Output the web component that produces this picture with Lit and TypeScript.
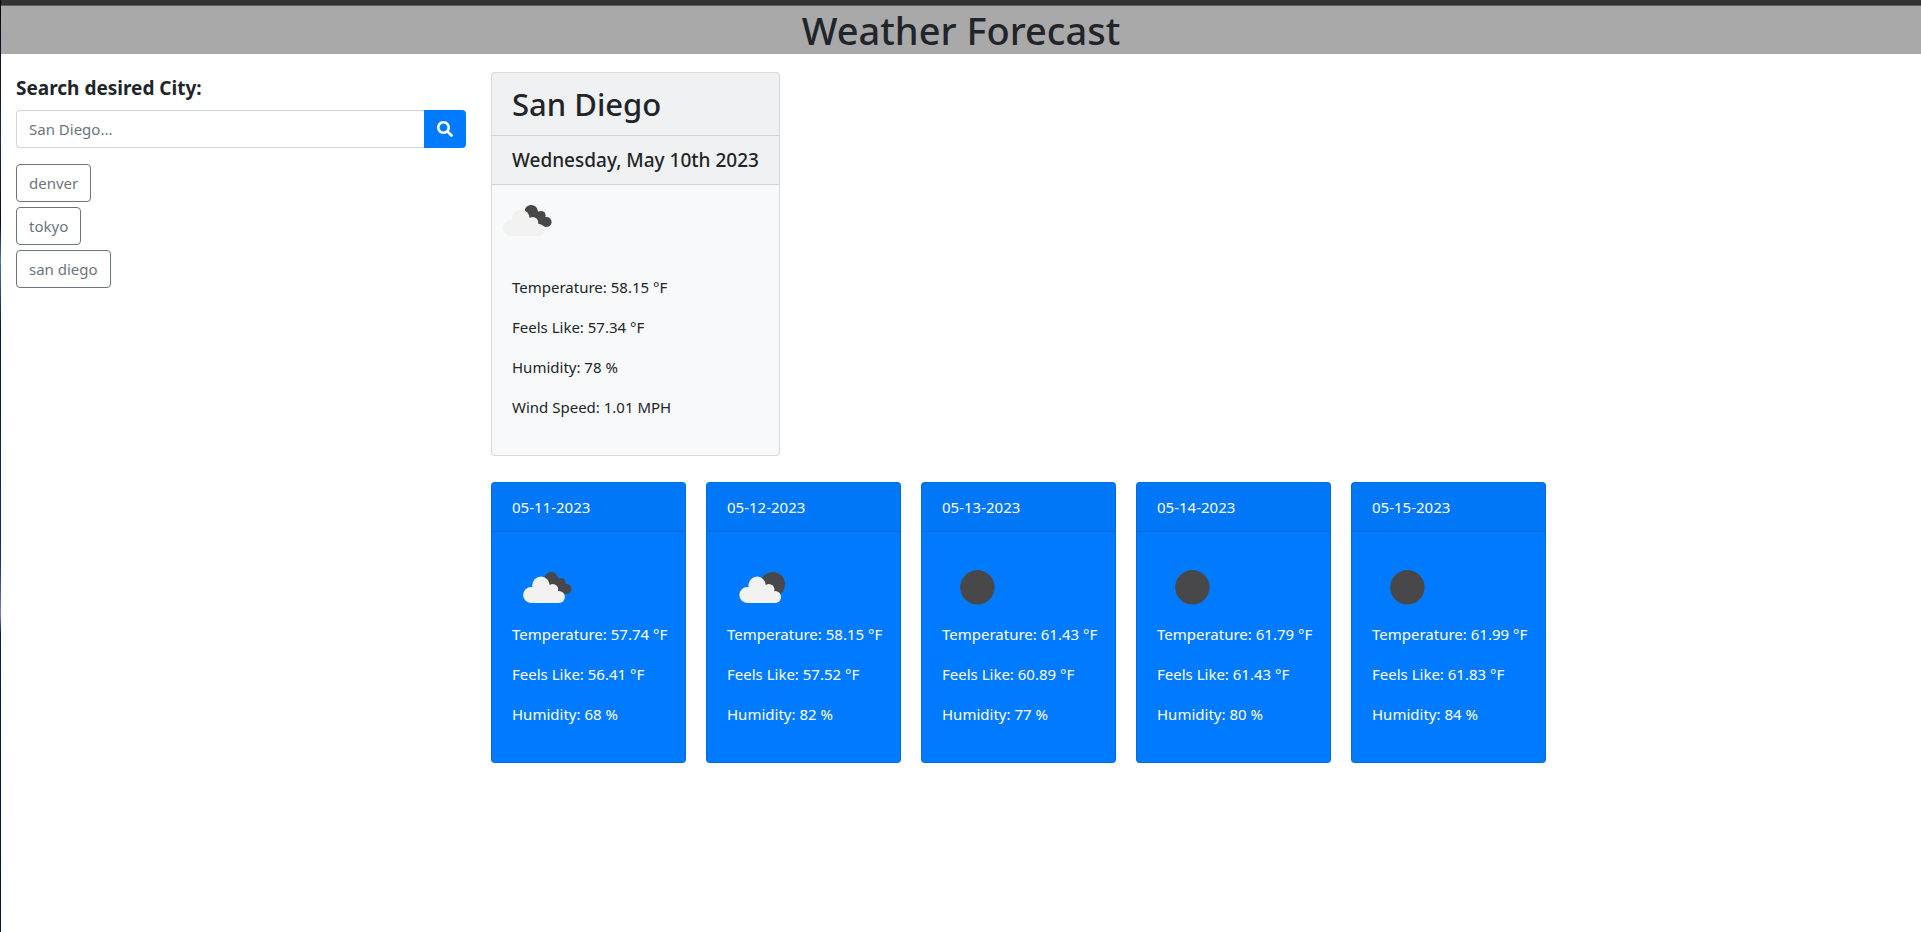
import { LitElement, html, svg, css } from "lit";
import { customElement, property, state } from "lit/decorators.js";

type Sky = "clouds" | "partly" | "clear";

interface Day {
  date: string;
  sky: Sky;
  temp: string;
  feels: string;
  humidity: string;
}

const FORECAST: Day[] = [
  { date: "05-11-2023", sky: "clouds", temp: "57.74", feels: "56.41", humidity: "68" },
  { date: "05-12-2023", sky: "partly", temp: "58.15", feels: "57.52", humidity: "82" },
  { date: "05-13-2023", sky: "clear", temp: "61.43", feels: "60.89", humidity: "77" },
  { date: "05-14-2023", sky: "clear", temp: "61.79", feels: "61.43", humidity: "80" },
  { date: "05-15-2023", sky: "clear", temp: "61.99", feels: "61.83", humidity: "84" },
];

@customElement("weather-icon")
export class WeatherIcon extends LitElement {
  @property() sky: Sky = "clear";

  static styles = css`
    :host { display: block; width: 70px; height: 70px; }
    .art { display: block; width: 100%; height: 100%; }
    .dark { fill: #48484a; }
    .light { fill: #f2f2f0; }
  `;

  private cloud(dx: number) {
    return svg`<g class="light" transform="translate(${dx} 0)">
      <circle cx="18.8" cy="43" r="7.9"/>
      <circle cx="28.7" cy="33.3" r="8.7"/>
      <circle cx="40.5" cy="37.4" r="5.5"/>
      <circle cx="46.7" cy="44.9" r="6"/>
      <path d="M18.8 36L28 31L42 36L47 42V50.9H18.8Z"/>
    </g>`;
  }

  render() {
    return html`<svg class="art" viewBox="0 0 70 70" aria-hidden="true">
      ${this.sky === "clear" ? svg`<circle class="dark" cx="35.4" cy="35.3" r="17.2"/>` : ""}
      ${this.sky === "partly" ? svg`<circle class="dark" cx="45.7" cy="32.3" r="12.3"/>${this.cloud(1.4)}` : ""}
      ${this.sky === "clouds"
        ? svg`<g class="dark">
            <circle cx="39.2" cy="26.5" r="6.6"/>
            <circle cx="49.3" cy="30.3" r="4.3"/>
            <circle cx="54.5" cy="37" r="5.1"/>
            <path d="M34 28L44 25L51 29L57 36L54.5 42L48 40Z"/>
          </g>${this.cloud(0.2)}`
        : ""}
    </svg>`;
  }
}

@customElement("app-root")
export class AppRoot extends LitElement {
  @state() private history = ["denver", "tokyo", "san diego"];

  static styles = css`
    :host {
      display: block;
      min-height: 100vh;
      box-sizing: border-box;
      padding-left: 1px;
      background:
        linear-gradient(#050814, #1a2a48 15%, #070b28 24%, #4a7ca0 28%, #0a1a3c 35%, #16305a 60%, #7a78e0 66%, #08204a 68%, #061430) left / 1px 100% no-repeat,
        #fff;
      color: #212529;
      font: 15px/24px "Noto Sans", "Open Sans", sans-serif;
    }
    * { box-sizing: border-box; }
    h1, h2, h3, p { margin: 0; font-weight: 500; }
    .banner {
      border-top: 5px solid #333;
      background: #a9a9a9;
      box-shadow: inset 0 1px #625c60;
      padding-top: 1px;
      text-align: center;
    }
    .banner h1 { font-size: 38px; line-height: 48px; }
    .layout { display: grid; grid-template-columns: 25% 1fr; }
    .side { padding: 22px 15px; }
    .label { display: block; font-size: 19px; font-weight: 700; line-height: 24px; margin: 0 0 10px; }
    .search { display: flex; height: 38px; margin-bottom: 16px; }
    .field {
      flex: 1;
      min-width: 0;
      padding: 6px 12px;
      border: 1px solid #ced4da;
      border-right: 0;
      border-radius: 4px 0 0 4px;
      color: #495057;
      font: inherit;
    }
    .field::placeholder { color: #6c757d; opacity: 1; }
    .go {
      width: 42px;
      display: grid;
      place-items: center;
      padding: 0;
      border: 0;
      border-radius: 0 4px 4px 0;
      background: #007bff;
      color: #fff;
    }
    .go svg { width: 16px; height: 16px; fill: currentColor; }
    .history { display: flex; flex-direction: column; align-items: flex-start; gap: 5px; }
    .city {
      height: 38px;
      padding: 0 12px;
      border: 1px solid #6c757d;
      border-radius: 4px;
      background: transparent;
      color: #6c757d;
      font: inherit;
    }
    .main { padding: 18px 10px; }
    .card { border: 1px solid rgba(0, 0, 0, 0.125); border-radius: 4px; }
    .head {
      padding: 12px 20px;
      background: rgba(0, 0, 0, 0.03);
      border-bottom: 1px solid rgba(0, 0, 0, 0.125);
    }
    .head h2 { font-size: 31px; line-height: 38px; }
    .head h3 { font-size: 19px; line-height: 24px; white-space: nowrap; }
    .body { padding: 20px; }
    .body p { font-weight: 400; margin-bottom: 16px; }
    .now { width: 289px; background: #f8f9fa; margin-bottom: 26px; }
    .days { display: flex; flex-wrap: wrap; gap: 20px; }
    .day { width: 195px; background: #007bff; color: #fff; white-space: nowrap; }
  `;

  render() {
    return html`
      <header class="banner"><h1>Weather Forecast</h1></header>
      <div class="layout">
        <aside class="side">
          <label class="label" for="city">Search desired City:</label>
          <form class="search" @submit=${(e: Event) => e.preventDefault()}>
            <input class="field" id="city" type="text" placeholder="San Diego..." />
            <button class="go" type="submit" aria-label="Search">
              <svg viewBox="0 0 512 512" aria-hidden="true">
                <path d="M505 442.700L405.300 343c-4.500-4.500-10.600-7-17-7H372c27.600-35.300 44-79.700 44-128C416 93.100 322.900 0 208 0S0 93.100 0 208s93.100 208 208 208c48.300 0 92.700-16.400 128-44v16.300c0 6.400 2.500 12.500 7 17l99.700 99.700c9.400 9.400 24.600 9.400 33.900 0l28.300-28.300c9.400-9.400 9.400-24.600.1-34zM208 336c-70.700 0-128-57.200-128-128 0-70.700 57.200-128 128-128 70.700 0 128 57.200 128 128 0 70.700-57.200 128-128 128z"/>
              </svg>
            </button>
          </form>
          <div class="history">
            ${this.history.map((c) => html`<button class="city" type="button">${c}</button>`)}
          </div>
        </aside>
        <main class="main">
          <section class="card now">
            <div class="head"><h2>San Diego</h2></div>
            <div class="head"><h3>Wednesday, May 10th 2023</h3></div>
            <weather-icon sky="clouds"></weather-icon>
            <div class="body">
              <p>Temperature: 58.15 °F</p>
              <p>Feels Like: 57.34 °F</p>
              <p>Humidity: 78 %</p>
              <p>Wind Speed: 1.01 MPH</p>
            </div>
          </section>
          <section class="days">
            ${FORECAST.map(
              (d) => html`<article class="card day">
                <div class="head">${d.date}</div>
                <div class="body">
                  <weather-icon .sky=${d.sky}></weather-icon>
                  <p>Temperature: ${d.temp} °F</p>
                  <p>Feels Like: ${d.feels} °F</p>
                  <p>Humidity: ${d.humidity} %</p>
                </div>
              </article>`
            )}
          </section>
        </main>
      </div>
    `;
  }
}
